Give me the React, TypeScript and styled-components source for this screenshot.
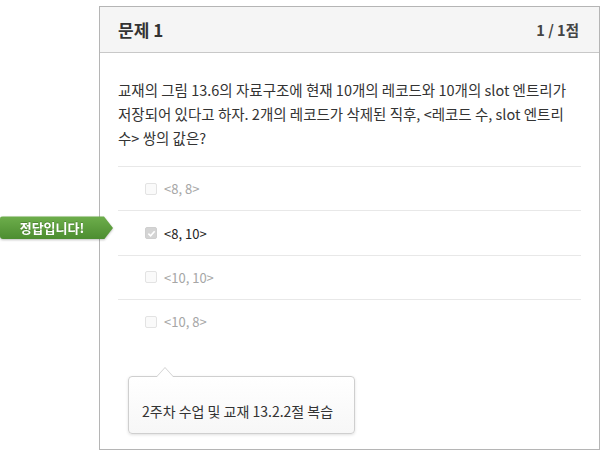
import React from "react";
import styled, { createGlobalStyle } from "styled-components";

const GlobalStyle = createGlobalStyle`
  html, body {
    margin: 0;
    padding: 0;
    background: #ffffff;
  }
  body {
    font-family: "Noto Sans CJK KR", "Noto Sans", sans-serif;
    color: #333;
  }
  * { box-sizing: border-box; }
`;

const Page = styled.div`
  padding: 6px 0 0 99px;
`;

const Card = styled.section`
  width: 501px;
  border: 1px solid #b5b5b5;
  background: #fff;
`;

const Header = styled.header`
  height: 46px;
  background: #f5f5f5;
  border-bottom: 1px solid #c8c8c8;
  display: flex;
  align-items: center;
  justify-content: space-between;
  padding: 0 20px 0 18px;
`;

const Title = styled.h2`
  margin: 0;
  font-size: 17px;
  font-weight: 700;
  color: #333;
`;

const Score = styled.span`
  font-size: 14.5px;
  font-weight: 700;
  color: #444;
`;

const Body = styled.div`
  padding: 25px 18px 15px 18px;
`;

const Question = styled.p`
  margin: 0;
  font-size: 14.5px;
  line-height: 24px;
  color: #333;
`;

const Options = styled.ul`
  list-style: none;
  margin: 16px 0 0 0;
  padding: 0;
`;

const Option = styled.li`
  position: relative;
  height: 44.4px;
  border-top: 1px solid #e8e8e8;
  display: flex;
  align-items: center;
  padding-left: 27px;
`;

const Box = styled.span<{ $checked?: boolean }>`
  width: 12px;
  height: 12px;
  border-radius: 2px;
  border: 1px solid ${(p) => (p.$checked ? "#cfcfcf" : "#e3e3e3")};
  background: ${(p) => (p.$checked ? "#d4d4d4" : "#fafafa")};
  display: inline-flex;
  align-items: center;
  justify-content: center;
  margin-right: 7px;
`;

const Label = styled.span<{ $active?: boolean }>`
  font-size: 13px;
  color: ${(p) => (p.$active ? "#222" : "#a6a6a6")};
`;

const BadgeShadow = styled.div`
  position: absolute;
  left: -118px;
  top: 5px;
  filter: drop-shadow(0 1px 1px rgba(0, 0, 0, 0.25));
`;

const Badge = styled.div`
  width: 113px;
  height: 23px;
  padding-right: 9px;
  border-radius: 3px 0 0 3px;
  background: linear-gradient(#6eae4c, #4c8d30);
  clip-path: polygon(0 0, 104px 0, 113px 50%, 104px 100%, 0 100%);
  display: flex;
  align-items: center;
  justify-content: center;
  color: #fff;
  font-size: 13px;
  font-weight: 700;
  text-shadow: 0 -1px 0 rgba(0, 0, 0, 0.2);
`;

const Hint = styled.div`
  position: relative;
  width: 227px;
  margin: 32px 0 0 10px;
  padding: 24px 13px 12px 13px;
  border: 1px solid #cfcfcf;
  border-radius: 4px;
  background: linear-gradient(#ffffff, #f7f7f7);
  box-shadow: 0 1px 3px rgba(0, 0, 0, 0.12);
  font-size: 14px;
  line-height: 20px;
  color: #333;

  &::before,
  &::after {
    content: "";
    position: absolute;
    left: 27px;
    width: 0;
    height: 0;
    border-left: 9px solid transparent;
    border-right: 9px solid transparent;
  }
  &::before {
    top: -10px;
    border-bottom: 10px solid #cfcfcf;
  }
  &::after {
    top: -9px;
    border-bottom: 10px solid #ffffff;
  }
`;

const Check = () => (
  <svg width="9" height="9" viewBox="0 0 10 10">
    <path d="M1.5 5.2 L4 7.5 L8.5 2.5" fill="none" stroke="#fff" strokeWidth="1.8" />
  </svg>
);

const choices = [
  { text: "<8, 8>", correct: false },
  { text: "<8, 10>", correct: true },
  { text: "<10, 10>", correct: false },
  { text: "<10, 8>", correct: false },
];

export default function App() {
  return (
    <>
      <GlobalStyle />
      <Page>
        <Card>
          <Header>
            <Title>문제 1</Title>
            <Score>1 / 1점</Score>
          </Header>
          <Body>
            <Question>
              교재의 그림 13.6의 자료구조에 현재 10개의 레코드와 10개의 slot 엔트리가
              <br />
              저장되어 있다고 하자. 2개의 레코드가 삭제된 직후, &lt;레코드 수, slot 엔트리
              <br />
              수&gt; 쌍의 값은?
            </Question>
            <Options>
              {choices.map((c) => (
                <Option key={c.text}>
                  {c.correct && (
                    <BadgeShadow>
                      <Badge>정답입니다!</Badge>
                    </BadgeShadow>
                  )}
                  <Box $checked={c.correct}>{c.correct && <Check />}</Box>
                  <Label $active={c.correct}>{c.text}</Label>
                </Option>
              ))}
            </Options>
            <Hint>2주차 수업 및 교재 13.2.2절 복습</Hint>
          </Body>
        </Card>
      </Page>
    </>
  );
}
